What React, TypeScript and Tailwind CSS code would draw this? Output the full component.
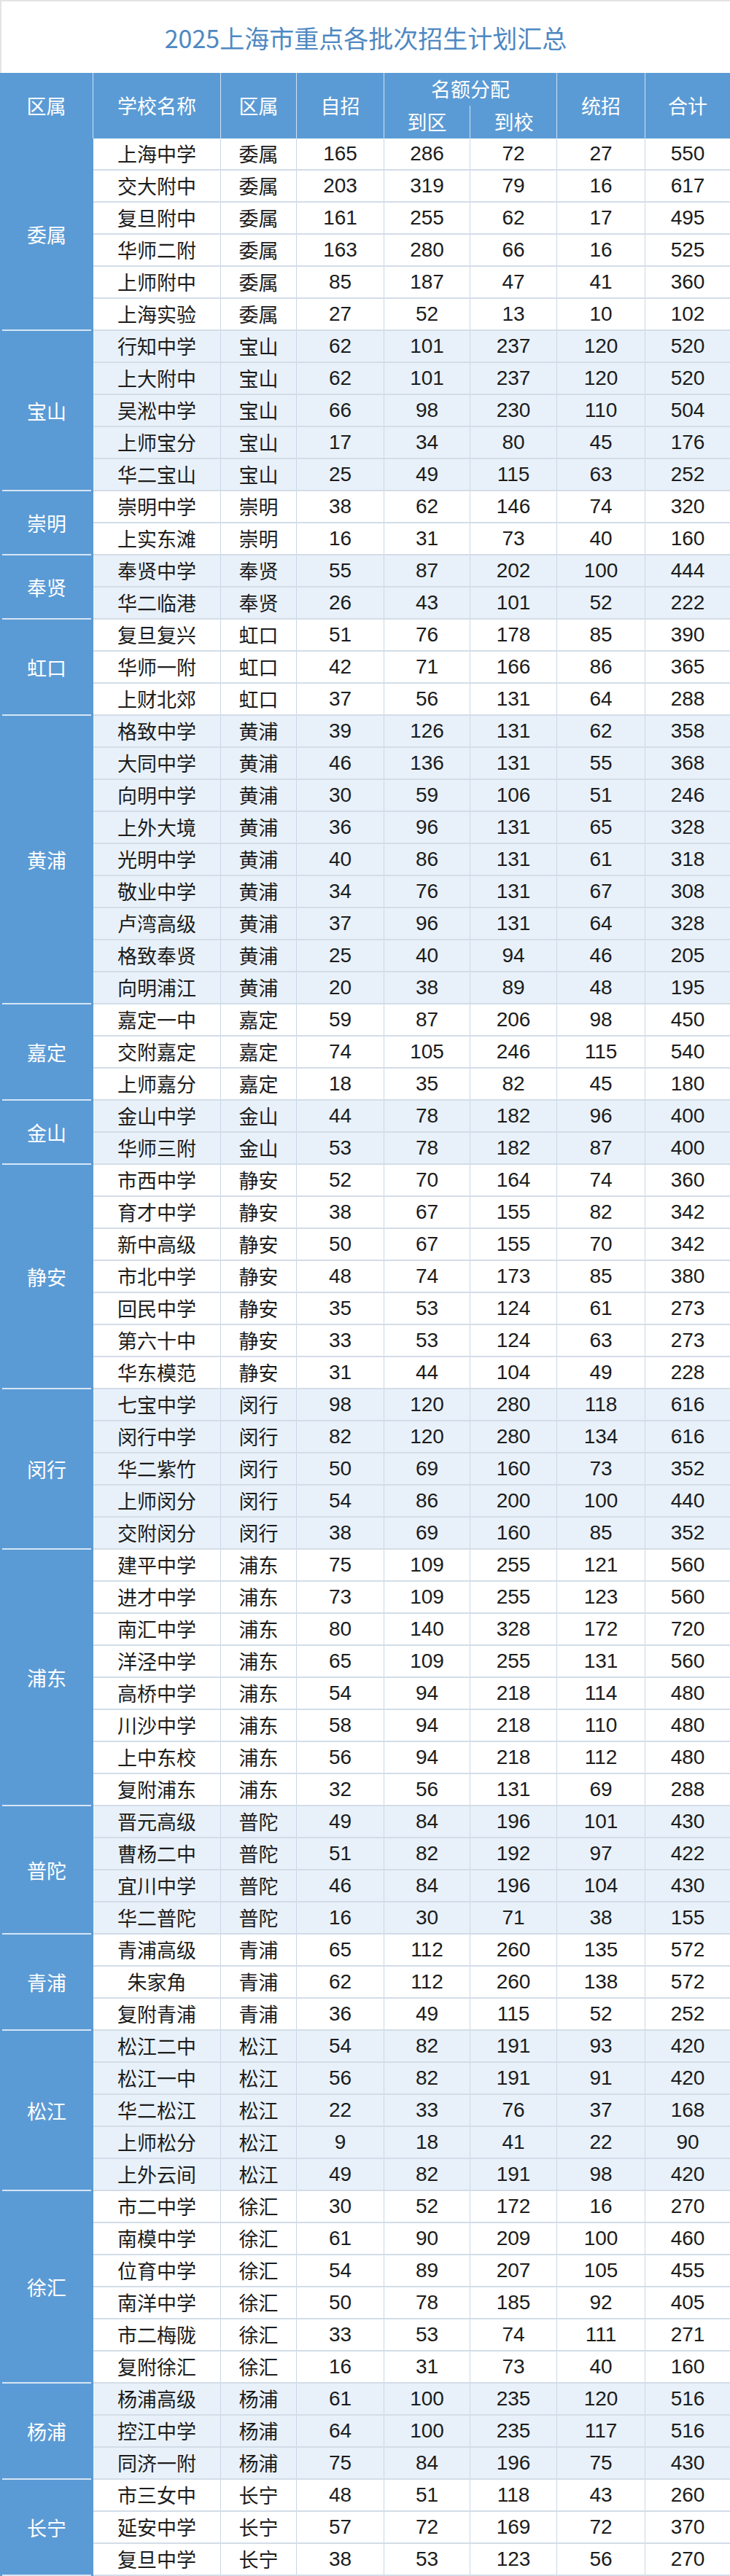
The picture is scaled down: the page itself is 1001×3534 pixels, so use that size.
type Row = [string, number, number, number, number, number];

type Group = {
  district: string;
  tinted: boolean;
  rows: Row[];
};

const groups: Group[] = [
  {
    district: "委属",
    tinted: false,
    rows: [
      ["上海中学", 165, 286, 72, 27, 550],
      ["交大附中", 203, 319, 79, 16, 617],
      ["复旦附中", 161, 255, 62, 17, 495],
      ["华师二附", 163, 280, 66, 16, 525],
      ["上师附中", 85, 187, 47, 41, 360],
      ["上海实验", 27, 52, 13, 10, 102],
    ],
  },
  {
    district: "宝山",
    tinted: true,
    rows: [
      ["行知中学", 62, 101, 237, 120, 520],
      ["上大附中", 62, 101, 237, 120, 520],
      ["吴淞中学", 66, 98, 230, 110, 504],
      ["上师宝分", 17, 34, 80, 45, 176],
      ["华二宝山", 25, 49, 115, 63, 252],
    ],
  },
  {
    district: "崇明",
    tinted: false,
    rows: [
      ["崇明中学", 38, 62, 146, 74, 320],
      ["上实东滩", 16, 31, 73, 40, 160],
    ],
  },
  {
    district: "奉贤",
    tinted: true,
    rows: [
      ["奉贤中学", 55, 87, 202, 100, 444],
      ["华二临港", 26, 43, 101, 52, 222],
    ],
  },
  {
    district: "虹口",
    tinted: false,
    rows: [
      ["复旦复兴", 51, 76, 178, 85, 390],
      ["华师一附", 42, 71, 166, 86, 365],
      ["上财北郊", 37, 56, 131, 64, 288],
    ],
  },
  {
    district: "黄浦",
    tinted: true,
    rows: [
      ["格致中学", 39, 126, 131, 62, 358],
      ["大同中学", 46, 136, 131, 55, 368],
      ["向明中学", 30, 59, 106, 51, 246],
      ["上外大境", 36, 96, 131, 65, 328],
      ["光明中学", 40, 86, 131, 61, 318],
      ["敬业中学", 34, 76, 131, 67, 308],
      ["卢湾高级", 37, 96, 131, 64, 328],
      ["格致奉贤", 25, 40, 94, 46, 205],
      ["向明浦江", 20, 38, 89, 48, 195],
    ],
  },
  {
    district: "嘉定",
    tinted: false,
    rows: [
      ["嘉定一中", 59, 87, 206, 98, 450],
      ["交附嘉定", 74, 105, 246, 115, 540],
      ["上师嘉分", 18, 35, 82, 45, 180],
    ],
  },
  {
    district: "金山",
    tinted: true,
    rows: [
      ["金山中学", 44, 78, 182, 96, 400],
      ["华师三附", 53, 78, 182, 87, 400],
    ],
  },
  {
    district: "静安",
    tinted: false,
    rows: [
      ["市西中学", 52, 70, 164, 74, 360],
      ["育才中学", 38, 67, 155, 82, 342],
      ["新中高级", 50, 67, 155, 70, 342],
      ["市北中学", 48, 74, 173, 85, 380],
      ["回民中学", 35, 53, 124, 61, 273],
      ["第六十中", 33, 53, 124, 63, 273],
      ["华东模范", 31, 44, 104, 49, 228],
    ],
  },
  {
    district: "闵行",
    tinted: true,
    rows: [
      ["七宝中学", 98, 120, 280, 118, 616],
      ["闵行中学", 82, 120, 280, 134, 616],
      ["华二紫竹", 50, 69, 160, 73, 352],
      ["上师闵分", 54, 86, 200, 100, 440],
      ["交附闵分", 38, 69, 160, 85, 352],
    ],
  },
  {
    district: "浦东",
    tinted: false,
    rows: [
      ["建平中学", 75, 109, 255, 121, 560],
      ["进才中学", 73, 109, 255, 123, 560],
      ["南汇中学", 80, 140, 328, 172, 720],
      ["洋泾中学", 65, 109, 255, 131, 560],
      ["高桥中学", 54, 94, 218, 114, 480],
      ["川沙中学", 58, 94, 218, 110, 480],
      ["上中东校", 56, 94, 218, 112, 480],
      ["复附浦东", 32, 56, 131, 69, 288],
    ],
  },
  {
    district: "普陀",
    tinted: true,
    rows: [
      ["晋元高级", 49, 84, 196, 101, 430],
      ["曹杨二中", 51, 82, 192, 97, 422],
      ["宜川中学", 46, 84, 196, 104, 430],
      ["华二普陀", 16, 30, 71, 38, 155],
    ],
  },
  {
    district: "青浦",
    tinted: false,
    rows: [
      ["青浦高级", 65, 112, 260, 135, 572],
      ["朱家角", 62, 112, 260, 138, 572],
      ["复附青浦", 36, 49, 115, 52, 252],
    ],
  },
  {
    district: "松江",
    tinted: true,
    rows: [
      ["松江二中", 54, 82, 191, 93, 420],
      ["松江一中", 56, 82, 191, 91, 420],
      ["华二松江", 22, 33, 76, 37, 168],
      ["上师松分", 9, 18, 41, 22, 90],
      ["上外云间", 49, 82, 191, 98, 420],
    ],
  },
  {
    district: "徐汇",
    tinted: false,
    rows: [
      ["市二中学", 30, 52, 172, 16, 270],
      ["南模中学", 61, 90, 209, 100, 460],
      ["位育中学", 54, 89, 207, 105, 455],
      ["南洋中学", 50, 78, 185, 92, 405],
      ["市二梅陇", 33, 53, 74, 111, 271],
      ["复附徐汇", 16, 31, 73, 40, 160],
    ],
  },
  {
    district: "杨浦",
    tinted: true,
    rows: [
      ["杨浦高级", 61, 100, 235, 120, 516],
      ["控江中学", 64, 100, 235, 117, 516],
      ["同济一附", 75, 84, 196, 75, 430],
    ],
  },
  {
    district: "长宁",
    tinted: false,
    rows: [
      ["市三女中", 48, 51, 118, 43, 260],
      ["延安中学", 57, 72, 169, 72, 370],
      ["复旦中学", 38, 53, 123, 56, 270],
    ],
  },
];

const cjk = "font-['Noto_Sans_CJK_SC','Liberation_Sans',sans-serif]";
const num = "font-['Liberation_Sans_Narrow','Liberation_Sans',sans-serif]";

// 7 data columns right of the district column
const cols = "grid grid-cols-[175px_104px_120px_118px_119px_121px_116px]";

function HeaderCell({ children, className = "" }: { children: React.ReactNode; className?: string }) {
  return (
    <div className={`flex items-center justify-center border-r border-white/70 text-[27px] text-white ${cjk} ${className}`}>
      {children}
    </div>
  );
}

function DataRow({ row, district }: { row: Row; district: string }) {
  const [name, ...nums] = row;
  return (
    <div className={`${cols} box-border h-[44px] border-b-2 border-[#d3dde8] text-[#1c1c1c]`}>
      <div className={`flex items-center justify-center border-r border-[#c9d7e5] text-[27px] ${cjk}`}>{name}</div>
      <div className={`flex items-center justify-center border-r border-[#c9d7e5] text-[27px] ${cjk}`}>{district}</div>
      {nums.map((n, i) => (
        <div
          key={i}
          className={`flex items-center justify-center text-[28px] ${num} ${i < 4 ? "border-r border-[#c9d7e5]" : ""}`}
        >
          {n}
        </div>
      ))}
    </div>
  );
}

export default function App() {
  return (
    <div className="w-[1001px] bg-white">
      <div className="flex h-[100px] items-center justify-center border-l-2 border-t-2 border-[#e4e4e4]">
        <h1 className={`text-[34px] text-[#4e88c2] ${cjk}`}>2025上海市重点各批次招生计划汇总</h1>
      </div>

      <div className="flex h-[90px] bg-[#5b9bd5]">
        <HeaderCell className="w-[128px]">区属</HeaderCell>
        <div className="grid flex-1 grid-cols-[175px_104px_120px_237px_121px_116px]">
          <HeaderCell>学校名称</HeaderCell>
          <HeaderCell>区属</HeaderCell>
          <HeaderCell>自招</HeaderCell>
          <div className="flex flex-col border-r border-white/70">
            <div className={`flex h-[45px] items-center justify-center text-[27px] text-white ${cjk}`}>名额分配</div>
            <div className="grid h-[45px] grid-cols-[118px_119px]">
              <HeaderCell>到区</HeaderCell>
              <HeaderCell className="border-r-0">到校</HeaderCell>
            </div>
          </div>
          <HeaderCell>统招</HeaderCell>
          <HeaderCell className="border-r-0">合计</HeaderCell>
        </div>
      </div>

      {groups.map((g) => (
        <div key={g.district} className={`flex ${g.tinted ? "bg-[#e8f1fa]" : "bg-white"}`}>
          <div className="relative flex w-[128px] items-center justify-center bg-[#5b9bd5]">
            <span className={`text-[27px] text-white ${cjk}`}>{g.district}</span>
            <span className="absolute bottom-0 left-[3px] right-[3px] h-[2px] bg-[#d6e6f5]" />
          </div>
          <div className="flex-1">
            {g.rows.map((r) => (
              <DataRow key={r[0]} row={r} district={g.district} />
            ))}
          </div>
        </div>
      ))}
    </div>
  );
}
